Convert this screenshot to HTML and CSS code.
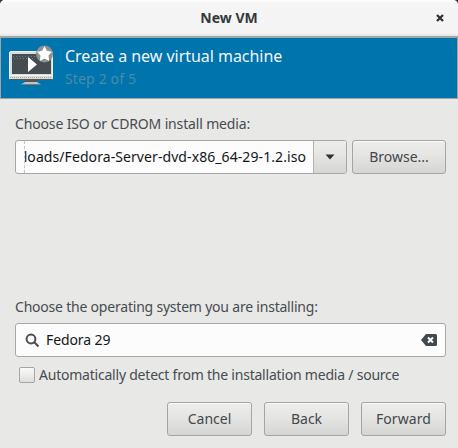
FILE: index.html
```html
<!DOCTYPE html>
<html lang="en">
<head>
<meta charset="utf-8">
<title>New VM</title>
<link rel="stylesheet" href="styles.css">
</head>
<body>
<div class="window">
  <header class="titlebar">
    <span class="title">New VM</span>
    <svg class="close" width="8" height="8" viewBox="0 0 8 8"><path d="M1 1L7 7M7 1L1 7"/></svg>
  </header>
  <section class="banner">
    <svg class="vm-icon" width="46" height="42" viewBox="0 0 46 42">
      <rect x="0.500" y="6.500" width="43" height="28" rx="1.500" fill="#dcddda" stroke="#eeeeec"/>
      <rect x="3" y="9" width="39" height="20" fill="#464d52"/>
      <path d="M4 11.500H29M5 13.500H24" stroke="#777e82" stroke-dasharray="1 2"/>
      <path d="M1 30.500H43" stroke="#f4f4f2"/>
      <path d="M1 32.500H43" stroke="#a5a7a4" stroke-dasharray="1 1"/>
      <path d="M1 34.500H43" stroke="#555753"/>
      <path d="M16 35H28V37L32 39.500H12L16 37Z" fill="#c4c5c2"/>
      <path d="M16 36H28" stroke="#555753" stroke-width="2"/>
      <path d="M12 39.500H32" stroke="#777975"/>
      <path d="M19 12L28 19.500L19 27Z" fill="#fff"/>
      <circle cx="35.500" cy="9" r="8.500" fill="#8d9191"/>
      <path d="M35.500 1.200L37.900 5.800L43 6.800L39.500 10.500L40.200 16L35.500 13.500L30.800 16L31.500 10.500L28 6.800L33.100 5.800Z" fill="#fff"/>
    </svg>
    <div class="heading">
      <h1>Create a new virtual machine</h1>
      <p>Step 2 of 5</p>
    </div>
  </section>
  <main class="content">
    <div class="label iso-label">Choose ISO or CDROM install media:</div>
    <div class="media-row">
      <div class="combo">
        <div class="entry-clip"><span>loads/Fedora-Server-dvd-x86_64-29-1.2.iso</span></div>
        <div class="drop"><svg width="10" height="6" viewBox="0 0 10 6"><path d="M0.500 0.500H9.500L5 5.500Z"/></svg></div>
      </div>
      <div class="button browse">Browse...</div>
    </div>
    <div class="label os-label">Choose the operating system you are installing:</div>
    <div class="search">
      <svg class="lens" width="15" height="15" viewBox="0 0 15 15"><circle cx="6" cy="6" r="4.400"/><path d="M9.300 9.300L13.500 13.500"/></svg>
      <span>Fedora 29</span>
      <svg class="clear" width="16" height="12" viewBox="0 0 16 12"><path d="M5 0H14.500Q16 0 16 1.500V10.500Q16 12 14.500 12H5L0 6Z" fill="#42494d"/><path d="M7 3.500L12 8.500M12 3.500L7 8.500" stroke="#fff" stroke-width="2"/></svg>
    </div>
    <div class="check-row"><span class="checkbox"></span><span class="check-label">Automatically detect from the installation media / source</span></div>
    <footer class="actions">
      <div class="button">Cancel</div>
      <div class="button">Back</div>
      <div class="button forward">Forward</div>
    </footer>
  </main>
</div>
</body>
</html>
```
FILE: styles.css
```css
* { box-sizing: border-box; }
body { margin: 0; background: #32383b; font: 14px/20px "Noto Sans", "Open Sans", sans-serif; color: #464c50; }
.window { width: 458px; height: 448px; overflow: hidden; background: #e8e8e6; border-radius: 5px 5px 0 0; white-space: nowrap; }
.titlebar { display: grid; grid-template-columns: 1fr auto 1fr; align-items: center; height: 38px; border-bottom: 2px solid #a4a7a5; background: linear-gradient(#fff 0, #f5f5f5 3px, #f4f4f4 33px, #e2e2e1 36px); }
.title { grid-column: 2; font-weight: 700; color: #34393c; }
.close { justify-self: end; margin-right: 14px; }
.close path { fill: none; stroke: #2e3436; stroke-width: 2.3; }
.banner { display: flex; height: 61px; padding: 7px 0 0 8px; background: #0074ac; border: 1px solid #a0a5a4; border-top: 0; }
.heading { margin-left: 10px; }
.heading h1 { margin: 0; font-size: 16px; line-height: 22px; font-weight: 400; letter-spacing: -0.03px; color: #f4f6f6; }
.heading p { margin: 2px 0 0; font-size: 14px; line-height: 20px; letter-spacing: 0.15px; color: #4b8ba9; }
.content { padding: 0 12px 12px 15px; }
.label { height: 20px; }
.iso-label { margin-top: 15px; letter-spacing: -0.15px; }
.media-row { display: flex; gap: 5px; margin-top: 6px; }
.combo { display: flex; width: 332px; height: 34px; border: 1px solid #a5a8a6; border-radius: 3px; background: #fcfcfc; overflow: hidden; }
.entry-clip { display: flex; justify-content: flex-end; width: 282px; margin: 0 7px 0 8px; border-left: 1px dashed #c4c6c4; line-height: 32px; letter-spacing: 0.08px; color: #141718; overflow: hidden; }
.drop { display: flex; flex: 1; align-items: center; justify-content: center; border-left: 1px solid #b0b3b1; background: linear-gradient(#ededec, #e6e6e4 40%, #d5d6d4); }
.drop path { fill: #2e3436; }
.button { display: flex; align-items: center; justify-content: center; width: 85px; height: 34px; border: 1px solid #a3a6a4; border-radius: 3px; background: linear-gradient(#ededec, #e6e6e4 40%, #d5d6d4); box-shadow: inset 0 1px #fafafa; color: #42484c; }
.browse { width: 94px; }
.forward { letter-spacing: 0.1px; }
.os-label { margin-top: 123px; letter-spacing: -0.21px; }
.search { display: flex; align-items: center; width: 431px; height: 34px; margin-top: 6px; padding: 0 8px 0 9px; border: 1px solid #a5a8a6; border-radius: 3px; background: #fcfcfc; letter-spacing: -0.1px; color: #141718; }
.lens { margin-right: 6px; fill: none; stroke: #464c50; stroke-width: 2; }
.clear { margin-left: auto; }
.check-row { display: flex; align-items: center; height: 20px; margin: 8px 0 0 4px; }
.checkbox { width: 16px; height: 16px; margin-right: 4px; border: 1px solid #a3a6a4; border-radius: 2px; background: linear-gradient(#fafafa, #dededc); }
.check-label { letter-spacing: -0.22px; }
.actions { display: flex; justify-content: flex-end; gap: 12px; margin-top: 17px; }
```
